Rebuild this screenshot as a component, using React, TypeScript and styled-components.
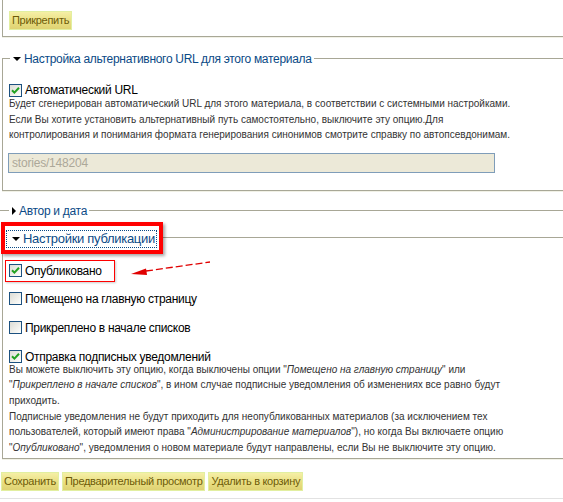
import React from "react"
import styled, { createGlobalStyle } from "styled-components"

const GlobalStyle = createGlobalStyle`
  html, body {
    margin: 0;
    padding: 0;
    background: #fff;
    overflow: hidden;
  }
  body {
    font-family: "Liberation Sans", Arial, sans-serif;
  }
`

const Page = styled.div`
  position: relative;
  width: 563px;
  height: 502px;
  overflow: hidden;
  padding-left: 2px;
  box-sizing: border-box;
`

const TopFieldset = styled.fieldset`
  margin: 0 -40px 0 0;
  padding: 10px 6px 6px;
  border: 1px solid #a8a796;
  border-top: none;
  border-right: none;
  box-shadow: 0 1px 0 #f1f1e6;
`

const Fieldset = styled.fieldset<{ $top: number; $bottom: number }>`
  margin: ${(p) => p.$top}px -40px 0 0;
  padding: 0 6px ${(p) => p.$bottom}px;
  border: 1px solid #a8a796;
  border-right: none;
  box-shadow: 0 1px 0 #f1f1e6;
  min-inline-size: 0;
`

const CollapsedFieldset = styled.fieldset`
  margin: 12px -40px 0 -2px;
  padding: 0 8px;
  border: none;
  border-top: 1px solid #a8a796;
  height: 0;
`

const Legend = styled.legend`
  padding: 0 2px 0 3px;
  margin-left: 1px;
  font-size: 12px;
  letter-spacing: -0.3px;
  line-height: 16px;
  color: #0b4a86;
  white-space: nowrap;
`

const LegendInner = styled.span`
  display: inline-flex;
  align-items: center;
  gap: 2px;
`

const MarkedLegend = styled.legend`
  margin-left: -8px;
  padding: 1px 2px 2px 1px;
  border: 4px solid #ff0000;
  box-shadow: 2px 2px 3px rgba(0, 0, 0, 0.35);
  white-space: nowrap;
`

const FocusLabel = styled.span`
  display: inline-flex;
  align-items: center;
  gap: 2px;
  padding: 0 1px 0 5px;
  border: 1px dotted #0b4a86;
  font-size: 13px;
  letter-spacing: -0.3px;
  line-height: 16px;
  color: #0b4a86;
`

const Caret = styled.span<{ $open: boolean }>`
  display: inline-block;
  width: 0;
  height: 0;
  ${(p) =>
    p.$open
      ? `border-left: 4px solid transparent;
         border-right: 4px solid transparent;
         border-top: 4px solid #000;`
      : `border-top: 4px solid transparent;
         border-bottom: 4px solid transparent;
         border-left: 4px solid #000;`}
  margin-right: 1px;
`

const CheckRow = styled.label<{ $top: number }>`
  display: flex;
  align-items: center;
  gap: 3px;
  margin-top: ${(p) => p.$top}px;
  font-size: 12px;
  letter-spacing: -0.3px;
  line-height: 14px;
  color: #000;
  white-space: nowrap;
`

const Marked = styled.span`
  display: inline-flex;
  align-items: center;
  gap: 3px;
  margin-left: -4px;
  padding: 3px 12px 3px 3px;
  border: 1px solid #ff0000;
  box-shadow: 1px 1px 2px rgba(0, 0, 0, 0.2);
`

const Box = styled.span`
  display: inline-flex;
  align-items: center;
  justify-content: center;
  width: 13px;
  height: 13px;
  box-sizing: border-box;
  border: 1px solid #1c5180;
  background: linear-gradient(135deg, #dcdcd5 0%, #f4f4f0 70%, #ffffff 100%);
  flex: none;
`

const Description = styled.div<{ $top: number }>`
  margin-top: ${(p) => p.$top}px;
  font-size: 10px;
  line-height: 15.6px;
  color: #333;
  white-space: nowrap;

  em {
    font-style: italic;
  }
`

const UrlInput = styled.input`
  display: block;
  margin: 10px 0 0 -1px;
  width: 487px;
  height: 20px;
  box-sizing: border-box;
  padding: 1px 3px;
  border: 1px solid #7f9db9;
  background: #ece9d8;
  color: #aca899;
  font-family: "Liberation Sans", Arial, sans-serif;
  font-size: 12px;
  letter-spacing: -0.2px;
`

const YellowButton = styled.button`
  height: 19px;
  padding: 0 2px;
  border: 1px solid #e2efa0;
  background: linear-gradient(#f5efa6, #e9df82 55%, #dfd273);
  color: #6d5a08;
  font-family: "Liberation Sans", Arial, sans-serif;
  font-size: 11px;
  letter-spacing: -0.3px;
  line-height: 17px;
  cursor: pointer;
`

const Actions = styled.div`
  display: flex;
  gap: 3px;
  margin: 13px 0 0 -1px;
`

const Footer = styled.div`
  margin: 7px -2px 0;
  border-top: 1px solid #e2e2e2;
`

const Overlay = styled.svg`
  position: absolute;
  left: 0;
  top: 0;
  pointer-events: none;
`

const Check = ({ checked }: { checked: boolean }) => (
  <Box>
    {checked && (
      <svg width="9" height="9" viewBox="0 0 9 9">
        <path
          d="M1 4.2 L3.4 6.6 L8 1.8"
          fill="none"
          stroke="#21a121"
          strokeWidth="2"
        />
      </svg>
    )}
  </Box>
)

const App = () => {
  return (
    <>
      <GlobalStyle />
      <Page>
        <TopFieldset>
          <YellowButton>Прикрепить</YellowButton>
        </TopFieldset>

        <Fieldset $top={12} $bottom={17}>
          <Legend>
            <LegendInner>
              <Caret $open />
              Настройка альтернативного URL для этого материала
            </LegendInner>
          </Legend>
          <CheckRow $top={16}>
            <Check checked />
            Автоматический URL
          </CheckRow>
          <Description $top={-1}>
            Будет сгенерирован автоматический URL для этого материала, в
            соответствии с системными настройками.
            <br />
            Если Вы хотите установить альтернативный путь самостоятельно,
            выключите эту опцию.Для
            <br />
            контролирования и понимания формата генерирования синонимов
            смотрите справку по автопсевдонимам.
          </Description>
          <UrlInput defaultValue="stories/148204" disabled />
        </Fieldset>

        <CollapsedFieldset>
          <Legend>
            <LegendInner>
              <Caret $open={false} />
              Автор и дата
            </LegendInner>
          </Legend>
        </CollapsedFieldset>

        <Fieldset $top={3} $bottom={3}>
          <MarkedLegend>
            <FocusLabel>
              <Caret $open />
              Настройки публикации
            </FocusLabel>
          </MarkedLegend>
          <CheckRow $top={6}>
            <Marked>
              <Check checked />
              Опубликовано
            </Marked>
          </CheckRow>
          <CheckRow $top={10}>
            <Check checked={false} />
            Помещено на главную страницу
          </CheckRow>
          <CheckRow $top={15}>
            <Check checked={false} />
            Прикреплено в начале списков
          </CheckRow>
          <CheckRow $top={15}>
            <Check checked />
            Отправка подписных уведомлений
          </CheckRow>
          <Description $top={-2}>
            Вы можете выключить эту опцию, когда выключены опции "
            <em>Помещено на главную страницу</em>" или
            <br />"<em>Прикреплено в начале списков</em>", в ином случае
            подписные уведомления об изменениях все равно будут
            <br />
            приходить.
            <br />
            Подписные уведомления не будут приходить для неопубликованных
            материалов (за исключением тех
            <br />
            пользователей, который имеют права "
            <em>Администрирование материалов</em>"), но когда Вы включаете
            опцию
            <br />"<em>Опубликовано</em>", уведомления о новом материале
            будут направлены, если Вы не выключите эту опцию.
          </Description>
        </Fieldset>

        <Actions>
          <YellowButton>Сохранить</YellowButton>
          <YellowButton>Предварительный просмотр</YellowButton>
          <YellowButton>Удалить в корзину</YellowButton>
        </Actions>
        <Footer />

        <Overlay width="563" height="502" viewBox="0 0 563 502">
          <line
            x1="146"
            y1="271"
            x2="210"
            y2="262"
            stroke="#e00000"
            strokeWidth="1.3"
            strokeDasharray="7 3"
          />
          <polygon points="131,274 146,268.5 147,275" fill="#e00000" />
        </Overlay>
      </Page>
    </>
  )
}

export default App
